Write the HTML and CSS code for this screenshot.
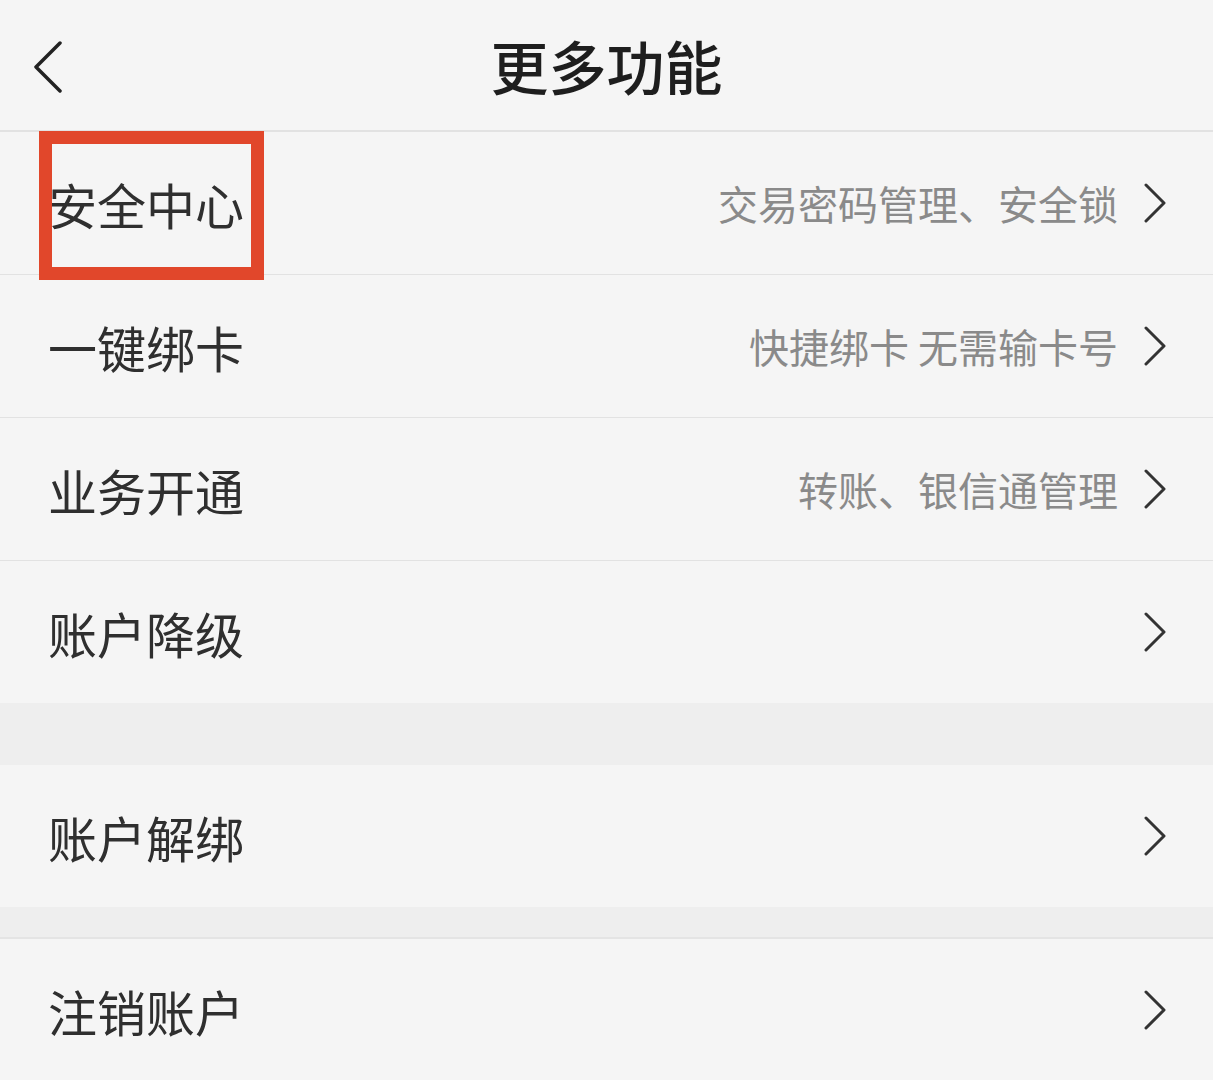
FILE: index.html
```html
<!DOCTYPE html>
<html lang="zh-CN">
<head>
    <meta charset="UTF-8">
    <meta name="viewport" content="width=device-width, initial-scale=1.0">
    <title>更多功能</title>
    <link rel="stylesheet" href="styles.css">
</head>
<body>

    <header class="topbar">
        <svg class="back" width="30" height="52" viewBox="0 0 30 52">
            <polyline points="27,2 3,26 27,50" fill="none" stroke="#222" stroke-width="3.5" stroke-linecap="round" stroke-linejoin="round"/>
        </svg>
        <h1>更多功能</h1>
    </header>

    <div class="group">
        <div class="row">
            <span class="label">安全中心</span>
            <span class="desc">交易密码管理、安全锁</span>
            <svg class="arrow" width="24" height="40" viewBox="0 0 24 40"><polyline points="3,2 21,20 3,38" fill="none" stroke="#333" stroke-width="3" stroke-linecap="round" stroke-linejoin="round"/></svg>
            <div class="mark"></div>
        </div>
        <div class="row">
            <span class="label">一键绑卡</span>
            <span class="desc">快捷绑卡 无需输卡号</span>
            <svg class="arrow" width="24" height="40" viewBox="0 0 24 40"><polyline points="3,2 21,20 3,38" fill="none" stroke="#333" stroke-width="3" stroke-linecap="round" stroke-linejoin="round"/></svg>
        </div>
        <div class="row">
            <span class="label">业务开通</span>
            <span class="desc">转账、银信通管理</span>
            <svg class="arrow" width="24" height="40" viewBox="0 0 24 40"><polyline points="3,2 21,20 3,38" fill="none" stroke="#333" stroke-width="3" stroke-linecap="round" stroke-linejoin="round"/></svg>
        </div>
        <div class="row last">
            <span class="label">账户降级</span>
            <svg class="arrow" width="24" height="40" viewBox="0 0 24 40"><polyline points="3,2 21,20 3,38" fill="none" stroke="#333" stroke-width="3" stroke-linecap="round" stroke-linejoin="round"/></svg>
        </div>
    </div>

    <div class="spacer big"></div>

    <div class="group">
        <div class="row last">
            <span class="label">账户解绑</span>
            <svg class="arrow" width="24" height="40" viewBox="0 0 24 40"><polyline points="3,2 21,20 3,38" fill="none" stroke="#333" stroke-width="3" stroke-linecap="round" stroke-linejoin="round"/></svg>
        </div>
    </div>

    <div class="spacer small"></div>

    <div class="group top-line">
        <div class="row last">
            <span class="label">注销账户</span>
            <svg class="arrow" width="24" height="40" viewBox="0 0 24 40"><polyline points="3,2 21,20 3,38" fill="none" stroke="#333" stroke-width="3" stroke-linecap="round" stroke-linejoin="round"/></svg>
        </div>
    </div>

</body>
</html>
```

FILE: styles.css
```css
body {
    margin: 0;
    background: #f5f5f5;
    font-family: "Noto Sans CJK SC", "Noto Sans", sans-serif;
    color: #333;
}
.topbar {
    position: relative;
    height: 130px;
    display: flex;
    align-items: center;
    justify-content: center;
    border-bottom: 2px solid #e2e2e2;
}
.topbar h1 {
    margin: 0;
    font-size: 58px;
    font-weight: 500;
    color: #1e1e1e;
    letter-spacing: 0;
}
.back {
    position: absolute;
    left: 33px;
    top: 41px;
}
.group {
    background: #f5f5f5;
}
.top-line {
    border-top: 2px solid #e4e4e4;
}
.row {
    position: relative;
    height: 142px;
    display: flex;
    align-items: center;
    padding: 0 46px 0 48px;
    border-bottom: 1px solid #e2e2e2;
}
.row.last {
    border-bottom: none;
}
.label {
    font-size: 49px;
    color: #2f2f2f;
    flex: 1;
}
.desc {
    font-size: 40px;
    color: #8a8a8a;
    margin-right: 25px;
}
.arrow {
    display: block;
}
.spacer {
    background: #eeeeee;
}
.spacer.big {
    height: 62px;
}
.spacer.small {
    height: 30px;
}
.mark {
    position: absolute;
    left: 39px;
    top: -1px;
    width: 199px;
    height: 123px;
    border: 13px solid #e1472b;
}
```
